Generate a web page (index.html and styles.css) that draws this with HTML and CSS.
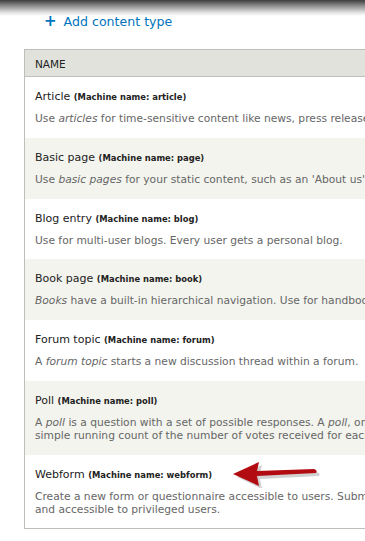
FILE: index.html
```html
<!DOCTYPE html>
<html lang="en">
<head>
    <meta charset="UTF-8">
    <meta name="viewport" content="width=device-width, initial-scale=1.0">
    <title>Content types</title>
    <link rel="stylesheet" href="styles.css">
</head>
<body>
    <div class="shade"></div>
    <div class="page">
        <ul class="action-links">
            <li><a href="#"><span class="plus">+</span>Add content type</a></li>
        </ul>
        <table class="types">
            <thead>
                <tr><th>NAME</th></tr>
            </thead>
            <tbody>
                <tr class="odd">
                    <td>
                        <div class="title">Article <small>(Machine name: article)</small></div>
                        <div class="desc">Use <em>articles</em> for time-sensitive content like news, press releases or blog posts.</div>
                    </td>
                </tr>
                <tr class="even">
                    <td>
                        <div class="title">Basic page <small>(Machine name: page)</small></div>
                        <div class="desc">Use <em>basic pages</em> for your static content, such as an 'About us' page.</div>
                    </td>
                </tr>
                <tr class="odd">
                    <td>
                        <div class="title">Blog entry <small>(Machine name: blog)</small></div>
                        <div class="desc">Use for multi-user blogs. Every user gets a personal blog.</div>
                    </td>
                </tr>
                <tr class="even">
                    <td>
                        <div class="title">Book page <small>(Machine name: book)</small></div>
                        <div class="desc"><em>Books</em> have a built-in hierarchical navigation. Use for handbooks or tutorials.</div>
                    </td>
                </tr>
                <tr class="odd">
                    <td>
                        <div class="title">Forum topic <small>(Machine name: forum)</small></div>
                        <div class="desc">A <em>forum topic</em> starts a new discussion thread within a forum.</div>
                    </td>
                </tr>
                <tr class="even">
                    <td>
                        <div class="title">Poll <small>(Machine name: poll)</small></div>
                        <div class="desc">A <em>poll</em> is a question with a set of possible responses. A <em>poll</em>, once created, automatically provides a<br>simple running count of the number of votes received for each response.</div>
                    </td>
                </tr>
                <tr class="odd">
                    <td>
                        <div class="title">Webform <small>(Machine name: webform)</small>
                            <svg class="arrow" width="92" height="26" viewBox="0 0 92 26">
                                <path d="M3 14 L28 2 L26 11 L83 9 Q87 10 85 13 L26 16 L28 26 Z" fill="#666" opacity="0.3" transform="translate(2 1)"/>
                                <path d="M1 12 L27 0 L25 9 L82 7 Q86 8 84 11 L25 14 L27 24 Z" fill="#b20c12"/>
                            </svg>
                        </div>
                        <div class="desc">Create a new form or questionnaire accessible to users. Submission results and statistics are recorded<br>and accessible to privileged users.</div>
                    </td>
                </tr>
            </tbody>
        </table>
    </div>
</body>
</html>
```

FILE: styles.css
```css
*{
    box-sizing: border-box;
}

html, body{
    margin: 0;
    height: 100%;
    overflow: hidden;
    background: #fff;
    font-family: "DejaVu Sans", Verdana, sans-serif;
}

.shade{
    height: 16px;
    background: linear-gradient(#3e3e3e, #8a8a8a 35%, #e4e4e4 80%, #fff);
}

.page{
    padding-left: 24px;
    width: 620px;
}

.action-links{
    list-style: none;
    margin: -5px 0 0 20px;
    padding: 0;
    height: 38px;
}

.action-links a{
    color: #0074bd;
    text-decoration: none;
    font-size: 12.6px;
}

.plus{
    display: inline-block;
    font-weight: bold;
    font-size: 15px;
    margin-right: 7px;
}

.types{
    width: 100%;
    border-collapse: collapse;
    border: 1px solid #bebfb9;
}

.types th{
    text-align: left;
    font-weight: normal;
    font-size: 10.5px;
    color: #222;
    background: #e1e2dc;
    border-bottom: 1px solid #bebfb9;
    height: 27px;
    padding: 1px 10px 0;
}

.types td{
    padding: 13px 10px 12.75px;
    vertical-align: top;
}

.odd{
    background: #fff;
}

.even{
    background: #f3f4ee;
}

.title{
    font-size: 11px;
    color: #222;
    height: 20px;
    position: relative;
}

.title small{
    font-size: 8.4px;
    font-weight: bold;
    color: #222;
}

.desc{
    font-size: 10.7px;
    line-height: 13px;
    color: #666;
    padding-top: 2px;
}

.arrow{
    position: absolute;
    left: 197px;
    top: -6px;
}
```
